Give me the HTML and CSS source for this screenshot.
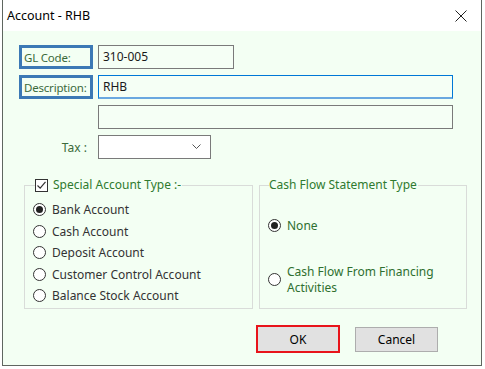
FILE: index.html
```html
<!DOCTYPE html>
<html lang="en">
<head>
    <meta charset="UTF-8">
    <title>Account - RHB</title>
    <link rel="stylesheet" href="styles.css">
</head>
<body>
    <div class="window">
        <div class="titlebar">
            <span class="title">Account - RHB</span>
            <svg class="close" width="12" height="12" viewBox="0 0 12 12">
                <path d="M0.5 0.5 L11.5 11.5 M11.5 0.5 L0.5 11.5" stroke="#222" stroke-width="1" fill="none"/>
            </svg>
        </div>
        <div class="content">
            <div class="form">
                <div class="row">
                    <span class="label boxed">GL Code:</span>
                    <div class="input short">310-005</div>
                </div>
                <div class="row">
                    <span class="label boxed">Description:</span>
                    <div class="input wide focus">RHB</div>
                </div>
                <div class="row">
                    <span class="label"></span>
                    <div class="input wide"></div>
                </div>
                <div class="row">
                    <span class="label tax">Tax :</span>
                    <div class="select">
                        <svg width="9" height="6" viewBox="0 0 9 6">
                            <path d="M0.5 0.5 L4.5 4.5 L8.5 0.5" stroke="#555" stroke-width="1" fill="none"/>
                        </svg>
                    </div>
                </div>
            </div>

            <div class="groups">
                <fieldset class="group left">
                    <legend>
                        <span class="checkbox">
                            <svg width="11" height="11" viewBox="0 0 11 11">
                                <path d="M1.5 5.5 L4.2 8.2 L9.5 1.8" stroke="#333" stroke-width="1.2" fill="none"/>
                            </svg>
                        </span>
                        Special Account Type :-
                    </legend>
                    <ul class="radios">
                        <li><span class="radio on"></span>Bank Account</li>
                        <li><span class="radio"></span>Cash Account</li>
                        <li><span class="radio"></span>Deposit Account</li>
                        <li><span class="radio"></span>Customer Control Account</li>
                        <li><span class="radio"></span>Balance Stock Account</li>
                    </ul>
                </fieldset>
                <fieldset class="group right">
                    <legend>Cash Flow Statement Type</legend>
                    <ul class="radios green">
                        <li><span class="radio on"></span>None</li>
                        <li class="two"><span class="radio"></span><span>Cash Flow From Financing Activities</span></li>
                    </ul>
                </fieldset>
            </div>

            <div class="buttons">
                <button class="btn ok">OK</button>
                <button class="btn">Cancel</button>
            </div>
        </div>
    </div>
</body>
</html>
```

FILE: styles.css
```css
body {
    margin: 0;
    background: #ffffff;
    font-family: "Noto Sans", "Open Sans", sans-serif;
    font-size: 12px;
    color: #1a1a1a;
}
.window {
    margin-left: 2px;
    width: 478px;
    height: 365px;
    border: 1px solid #5f6660;
    border-top: none;
    display: flex;
    flex-direction: column;
}
.titlebar {
    height: 31px;
    background: #ffffff;
    display: flex;
    align-items: center;
    justify-content: space-between;
    padding: 0 14px 0 4px;
    flex-shrink: 0;
}
.title {
    font-size: 12.5px;
    color: #000;
}
.content {
    flex: 1;
    background: #f3fff3;
    padding: 14px 0 0 16px;
}
.form {
    display: flex;
    flex-direction: column;
    gap: 6px;
}
.row {
    display: flex;
    align-items: center;
    gap: 5px;
}
.label {
    width: 74px;
    height: 24px;
    box-sizing: border-box;
    display: flex;
    align-items: center;
    padding-left: 5px;
    color: #3b6a3b;
    white-space: nowrap;
}
.label.boxed {
    border: 3px solid #3c79b5;
    padding-left: 2px;
    font-size: 11.5px;
    letter-spacing: -0.2px;
}
.label.tax {
    justify-content: flex-end;
    padding-right: 6px;
}
.input {
    height: 24px;
    box-sizing: border-box;
    border: 1px solid #7a7a7a;
    background: #f5fff5;
    padding: 2px 4px;
    line-height: 18px;
}
.input.short {
    width: 136px;
}
.input.wide {
    width: 355px;
}
.input.focus {
    border-color: #0078d7;
    border-bottom: 2px solid #6aa8e0;
}
.select {
    width: 113px;
    height: 24px;
    box-sizing: border-box;
    border: 1px solid #7a7a7a;
    background: #ffffff;
    display: flex;
    align-items: center;
    justify-content: flex-end;
    padding-right: 9px;
}
.groups {
    display: flex;
    gap: 6px;
    margin-top: 18px;
    margin-left: 5px;
}
.group {
    margin: 0;
    border: 1px solid #d9dcd9;
    padding: 0;
    height: 132px;
    box-sizing: border-box;
}
.group.left {
    width: 229px;
}
.group.right {
    width: 208px;
}
.group legend {
    padding: 0 1px 0 0;
    margin-left: 10px;
    color: #2f7a2f;
    display: flex;
    align-items: center;
    line-height: 16px;
}
.group.right legend {
    margin-left: 9px;
}
.checkbox {
    width: 13px;
    height: 13px;
    box-sizing: border-box;
    border: 1px solid #333;
    background: #fff;
    display: flex;
    align-items: center;
    justify-content: center;
    margin-right: 5px;
}
.radios {
    list-style: none;
    margin: 0;
    padding: 0 0 0 8px;
}
.radios li {
    display: flex;
    align-items: center;
    height: 21.5px;
    color: #333;
}
.group.left .radios {
    padding-top: 6px;
}
.radios.green li {
    color: #2f6f2f;
}
.group.right .radios {
    padding-top: 22px;
}
.radios li.two {
    height: 34px;
    margin-top: 26px;
    line-height: 16px;
}
.radios li.two span:last-child {
    width: 160px;
}
.radio {
    width: 13px;
    height: 13px;
    box-sizing: border-box;
    border: 1px solid #333;
    border-radius: 50%;
    background: #fff;
    margin-right: 6px;
    flex-shrink: 0;
    display: flex;
    align-items: center;
    justify-content: center;
}
.radio.on::after {
    content: "";
    width: 7px;
    height: 7px;
    border-radius: 50%;
    background: #222;
}
.buttons {
    display: flex;
    align-items: center;
    gap: 15px;
    margin-top: 16px;
    margin-left: 237px;
}
.btn {
    width: 83px;
    height: 25px;
    border: 1px solid #adadad;
    background: #e1e1e1;
    font-family: inherit;
    font-size: 12px;
    color: #000;
    padding: 0;
}
.btn.ok {
    width: 84px;
    height: 28px;
    border: 2px solid #e8141a;
}
```
